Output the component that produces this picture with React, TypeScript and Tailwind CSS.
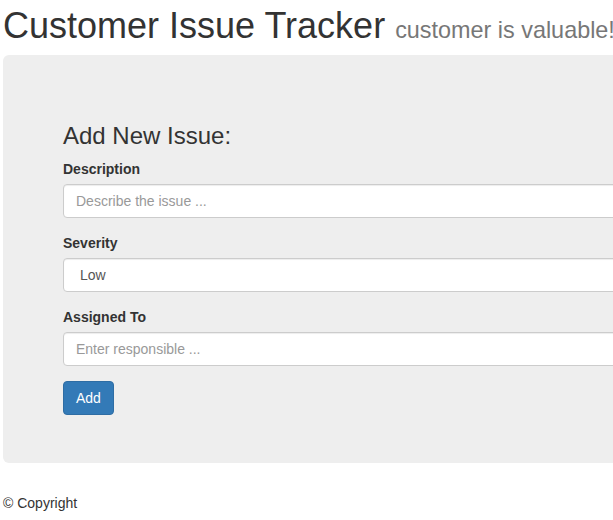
import React from "react";

const inputCls =
  "block w-full h-[34px] px-3 py-[6px] text-[14px] leading-[20px] text-[#555] bg-white border border-[#ccc] rounded-[4px] shadow-[inset_0_1px_1px_rgba(0,0,0,0.075)] placeholder:text-[#999] outline-none";

function Field({ label, children }: { label: string; children: React.ReactNode }) {
  return (
    <div className="mb-[15px]">
      <label className="block mb-[5px] text-[14px] leading-[20px] font-bold text-[#333]">
        {label}
      </label>
      {children}
    </div>
  );
}

export default function App() {
  return (
    <div className="w-[613px] overflow-hidden bg-white font-['Liberation_Sans',Arial,sans-serif] text-[#333]">
      <div className="w-[760px] pl-[3px]">
        <h1 className="mt-[6px] mb-[9px] h-[40px] text-[36px] leading-[40px] font-medium text-[#333] whitespace-nowrap">
          Customer Issue Tracker{" "}
          <small className="text-[23.4px] leading-none font-normal text-[#777]">customer is valuable!</small>
        </h1>

        <div className="bg-[#eee] rounded-[6px] pt-[48px] pb-[48px] px-[60px] mb-[30px]">
          <h3 className="mt-[20px] mb-[10px] text-[24px] leading-[26.4px] font-medium text-[#333]">
            Add New Issue:
          </h3>
          <form onSubmit={(e) => e.preventDefault()}>
            <Field label="Description">
              <input type="text" placeholder="Describe the issue ..." className={inputCls} />
            </Field>
            <Field label="Severity">
              <select
                defaultValue="Low"
                className={`${inputCls} appearance-none pl-[16px]`}
              >
                <option>Low</option>
                <option>Medium</option>
                <option>High</option>
              </select>
            </Field>
            <Field label="Assigned To">
              <input type="text" placeholder="Enter responsible ..." className={inputCls} />
            </Field>
            <button
              type="submit"
              className="h-[34px] px-3 py-[6px] text-[14px] leading-[20px] text-white bg-[#337ab7] border border-[#2e6da4] rounded-[4px]"
            >
              Add
            </button>
          </form>
        </div>

        <footer className="text-[14px] leading-[20px] text-[#333] pb-2">© Copyright</footer>
      </div>
    </div>
  );
}
